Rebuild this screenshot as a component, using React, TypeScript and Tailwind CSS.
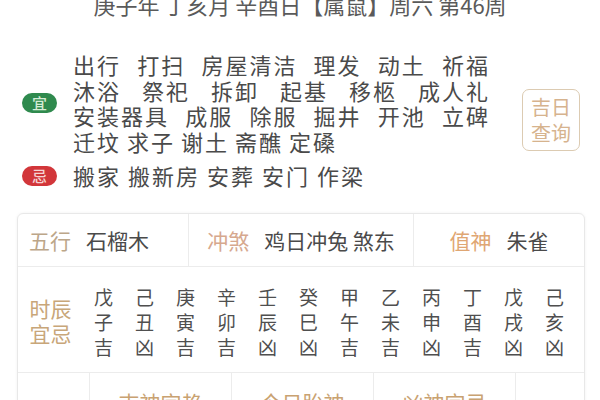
import React from "react";

const FONT = { fontFamily: '"Noto Sans CJK SC", "Noto Sans", sans-serif' };

const yiLines = [
  ["出行", "打扫", "房屋清洁", "理发", "动土", "祈福"],
  ["沐浴", "祭祀", "拆卸", "起基", "移柩", "成人礼"],
  ["安装器具", "成服", "除服", "掘井", "开池", "立碑"],
];
const yiLast = ["迁坟", "求子", "谢土", "斋醮", "定磉"];
const ji = ["搬家", "搬新房", "安葬", "安门", "作梁"];

const hours = [
  ["戊", "子", "吉"],
  ["己", "丑", "凶"],
  ["庚", "寅", "吉"],
  ["辛", "卯", "吉"],
  ["壬", "辰", "凶"],
  ["癸", "巳", "凶"],
  ["甲", "午", "吉"],
  ["乙", "未", "吉"],
  ["丙", "申", "凶"],
  ["丁", "酉", "吉"],
  ["戊", "戌", "凶"],
  ["己", "亥", "凶"],
];

export default function App() {
  return (
    <div className="w-[600px] h-[400px] overflow-hidden bg-white relative" style={FONT}>
      <div className="-mt-[7px] h-[22px] text-center text-[22px] leading-[22px] text-[#5a5a5a] whitespace-nowrap">
        庚子年 丁亥月 辛酉日【属鼠】周六 第46周
      </div>

      <div className="mt-[37px] flex items-center">
        <div className="w-[490px]">
          <div className="flex items-center">
            <div className="w-[73px] pl-[22px]">
              <div className="w-[35px] h-[20px] rounded-full bg-[#2f8a4e] text-[#d6ecd6] text-[15px] leading-[20px] text-center font-medium">
                宜
              </div>
            </div>
            <div className="w-[417px] text-[22px] leading-[25.5px] text-[#4a4a4a] tracking-[2px]">
              {yiLines.map((line, i) => (
                <div key={i} className="flex justify-between">
                  {line.map((w, j) => (
                    <span key={j}>{w}</span>
                  ))}
                </div>
              ))}
              <div className="flex gap-[6px]">
                {yiLast.map((w, j) => (
                  <span key={j}>{w}</span>
                ))}
              </div>
            </div>
          </div>
          <div className="mt-[9px] flex items-center">
            <div className="w-[73px] pl-[22px]">
              <div className="w-[35px] h-[20px] rounded-full bg-[#d2363a] text-[#f6d3d3] text-[15px] leading-[20px] text-center font-medium">
                忌
              </div>
            </div>
            <div className="flex gap-[7px] text-[22px] leading-[25.5px] text-[#4a4a4a] tracking-[2px]">
              {ji.map((w, j) => (
                <span key={j}>{w}</span>
              ))}
            </div>
          </div>
        </div>
        <div className="ml-[32px] w-[58px] h-[62px] rounded-[7px] border-[1.5px] border-[#dccbb2] flex flex-col items-center justify-center text-[20px] leading-[26px] text-[#d6b38e]">
          <span>吉日</span>
          <span>查询</span>
        </div>
      </div>

      <div className="mt-[24px] ml-[17px] w-[568px] border border-[#e8e8e8] rounded-[6px] shadow-[0_0_3px_rgba(0,0,0,0.06)]">
        <div className="flex h-[53px] border-b border-[#ececec] text-[21px] leading-[26px]">
          <div className="w-[171px] border-r border-[#ececec] flex items-center pl-[11px] gap-[15px]">
            <span className="text-[#bca689]">五行</span>
            <span className="text-[#4a4a4a]">石榴木</span>
          </div>
          <div className="w-[225px] border-r border-[#ececec] flex items-center justify-center gap-[15px]">
            <span className="text-[#d6a88e]">冲煞</span>
            <span className="text-[#4a4a4a]">鸡日冲兔 煞东</span>
          </div>
          <div className="flex-1 flex items-center justify-center gap-[15px]">
            <span className="text-[#dfa673]">值神</span>
            <span className="text-[#4a4a4a]">朱雀</span>
          </div>
        </div>

        <div className="flex h-[106px] border-b border-[#ececec] items-center pt-[4px]">
          <div className="w-[65px] flex flex-col items-center text-[21px] leading-[25px] text-[#c8a679]">
            <span>时辰</span>
            <span>宜忌</span>
          </div>
          {hours.map((h, i) => (
            <div key={i} className="w-[41px] flex flex-col items-center text-[19px] leading-[25px] text-[#4f4f4f]">
              {h.map((c, j) => (
                <span key={j}>{c}</span>
              ))}
            </div>
          ))}
        </div>

        <div className="flex h-[58px] text-[21px] leading-[26px] text-[#c9a271]">
          <div className="w-[72px] border-r border-[#ececec]" />
          <div className="w-[142px] border-r border-[#ececec] flex items-center justify-center">吉神宜趋</div>
          <div className="w-[142px] border-r border-[#ececec] flex items-center justify-center">今日胎神</div>
          <div className="w-[142px] border-r border-[#ececec] flex items-center justify-center">凶神宜忌</div>
          <div className="flex-1" />
        </div>
      </div>
    </div>
  );
}
